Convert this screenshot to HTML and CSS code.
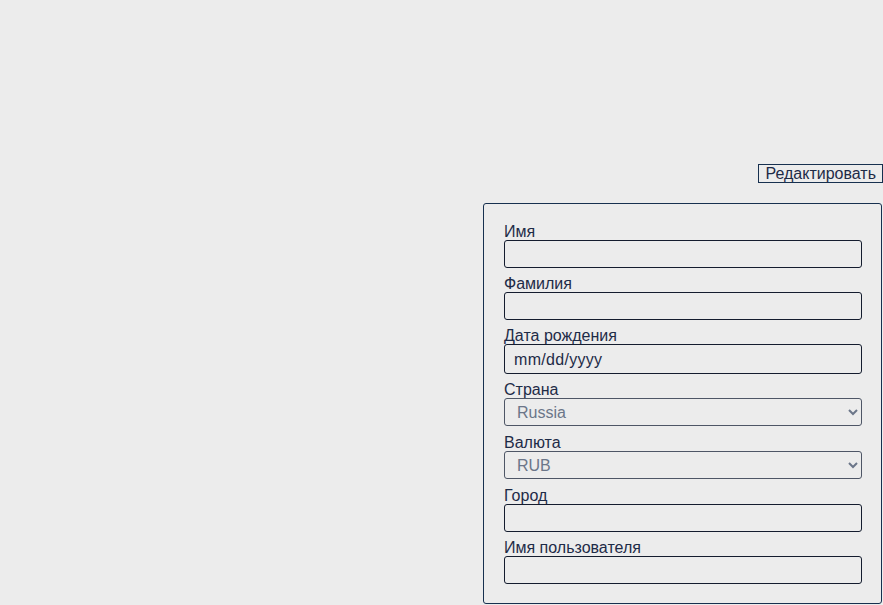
FILE: index.html
```html
<!DOCTYPE html>
<html lang="ru">
<head>
<meta charset="utf-8">
<link rel="stylesheet" href="styles.css">
</head>
<body>
<div class="page">
  <div class="toolbar">
    <button class="edit-btn" type="button">Редактировать</button>
  </div>
  <form class="panel">
    <div class="field">
      <label class="label">Имя</label>
      <input class="control" type="text" disabled>
    </div>
    <div class="field">
      <label class="label">Фамилия</label>
      <input class="control" type="text" disabled>
    </div>
    <div class="field">
      <label class="label">Дата рождения</label>
      <input class="control date" type="text" value="mm/dd/yyyy" disabled>
    </div>
    <div class="field field-select">
      <label class="label">Страна</label>
      <select class="control select" disabled><option>Russia</option></select>
    </div>
    <div class="field field-select">
      <label class="label">Валюта</label>
      <select class="control select" disabled><option>RUB</option></select>
    </div>
    <div class="field">
      <label class="label">Город</label>
      <input class="control" type="text" disabled>
    </div>
    <div class="field">
      <label class="label">Имя пользователя</label>
      <input class="control" type="text" disabled>
    </div>
  </form>
</div>
</body>
</html>
```
FILE: styles.css
```css
html, body {
  margin: 0;
  padding: 0;
  background: #ececec;
}
body {
  font-family: "Liberation Sans", Arial, sans-serif;
  color: #1e2b47;
}
.page {
  display: flex;
  flex-direction: column;
  align-items: flex-end;
  padding-top: 164px;
}
.toolbar {
  display: flex;
  justify-content: flex-end;
}
.edit-btn {
  font-family: "Liberation Sans", Arial, sans-serif;
  font-size: 16px;
  line-height: 17px;
  color: #1e2b47;
  background: #ececec;
  border: 1px solid #17304f;
  border-radius: 0;
  padding: 0 6px;
  margin: 0;
  cursor: pointer;
}
.panel {
  box-sizing: border-box;
  width: 399px;
  margin-top: 20px;
  margin-right: 1px;
  border: 1px solid #17304f;
  border-radius: 3px;
  padding: 19px 19px 19px 20px;
  display: flex;
  flex-direction: column;
  gap: 7px;
}
.field {
  display: flex;
  flex-direction: column;
}
.label {
  font-size: 16px;
  line-height: 17px;
  color: #1e2b47;
}
.control {
  box-sizing: border-box;
  width: 358px;
  height: 28px;
  margin: 0;
  border: 1px solid #141c2e;
  border-radius: 3px;
  background: #ececec;
  font-family: "Liberation Sans", Arial, sans-serif;
  font-size: 16px;
  color: #1e2b47;
  padding: 0 9px;
}
.date {
  height: 30px;
  padding-top: 2px;
  letter-spacing: 0.3px;
  color: #1e2b47;
  -webkit-text-fill-color: #1e2b47;
}
.field-select {
  margin-bottom: 1px;
}
.select {
  border-color: #4e5666;
  color: #6b7689;
  padding-left: 8px;
  opacity: 1;
}
```
